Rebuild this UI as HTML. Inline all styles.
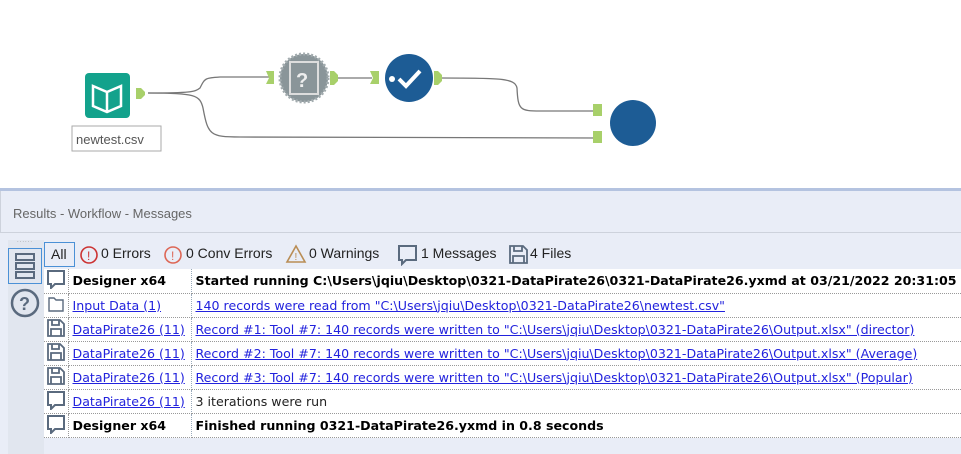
<!DOCTYPE html>
<html><head><style>
*{margin:0;padding:0;box-sizing:border-box}
body{width:961px;height:454px;overflow:hidden;background:#fff;font-family:"Liberation Sans",sans-serif;position:relative}
.abs{position:absolute}
.panel{left:0;top:188px;width:961px;height:266px;background:#e9edf7;border-top:3px solid #b4c3e0}
.hdr{left:0;top:191px;width:961px;height:42px;border-bottom:1px solid #cdd2dc;border-left:1px solid #cdd2dc}
.hdr span{position:absolute;left:12px;top:15px;font-size:13px;color:#666}
.tb{top:240px;font-size:14px;color:#222;height:26px;line-height:26px}
table{position:absolute;left:44px;top:269px;width:917px;table-layout:fixed;border-collapse:collapse;font-family:"DejaVu Sans",sans-serif;font-size:12.6px;background:#fff}
td{height:24px;border-bottom:1px dotted #999;white-space:nowrap;overflow:hidden;padding:0 4px;color:#222}
td.i{border-right:1px dotted #999;padding:0 2px}
td.s{border-right:1px dotted #9ab;padding-left:4px}
a{color:#2222dd;text-decoration:underline}
b{color:#000}
</style></head><body>
<svg class="abs" style="left:0;top:0" width="961" height="188">
<g fill="none" stroke="#777" stroke-width="1.3">
<path d="M148 93 C190 93,195 92,200 88 C205 78,205 78,220 77 L270 77"/>
<path d="M148 93 C195 93,200 95,203 108 C208 135,210 137,240 137 L596 138"/>
<path d="M338 78 L372 78"/>
<path d="M440 78 C500 78,515 78,517 88 C518 110,520 111,540 111 L596 111"/>
</g>
<rect x="85" y="73" width="45" height="45" rx="4" fill="#13a28c"/>
<path d="M93 86 L107 92 L121 86 L121 106 L107 112 L93 106Z M107 92 L107 112" fill="none" stroke="#fff" stroke-width="2.5"/>
<path d="M136 88 h5 l4 4 v3 l-4 4 h-5z" fill="#a8d06a"/>
<rect x="72" y="126" width="89" height="25" fill="#fff" stroke="#aaa"/>
<text x="76" y="144" font-size="13" fill="#555" font-family="Liberation Sans">newtest.csv</text>
<path d="M266 71 h8 v13 h-8 l3 -6z" fill="#a8d06a"/>
<circle cx="304" cy="78" r="24" fill="#8a9599" stroke="#a2abae" stroke-width="3" stroke-dasharray="2 2"/>
<rect x="290" y="62" width="28" height="32" fill="none" stroke="#ddd" stroke-width="2"/>
<text x="296" y="87" font-size="20" font-weight="bold" fill="#eee" font-family="Liberation Sans">?</text>
<path d="M330 71 h4 l4 4 v6 l-4 4 h-4z" fill="#a8d06a"/>
<path d="M370 71 h9 v13 h-9 l3 -6z" fill="#a8d06a"/>
<circle cx="409" cy="78" r="24" fill="#1d5c95"/>
<circle cx="392" cy="79" r="3" fill="#fff"/>
<path d="M399 79 l7 7 l14 -15" fill="none" stroke="#fff" stroke-width="4"/>
<path d="M434 71 h4 l4 4 v6 l-4 4 h-4z" fill="#a8d06a"/>
<rect x="593" y="104" width="9" height="12" fill="#a8d06a"/>
<rect x="593" y="131" width="9" height="12" fill="#a8d06a"/>
<circle cx="633" cy="123" r="23" fill="#1d5c95"/>
</svg>
<div class="abs panel"></div>
<div class="abs hdr"><span>Results - Workflow - Messages</span></div>
<div class="abs" style="left:8px;top:240px;width:36px;height:214px;background:#e1e6ef"></div>
<div class="abs" style="left:17px;top:238px;font-size:6px;color:#999;letter-spacing:1px">......</div>
<div class="abs" style="left:8px;top:248px;width:34px;height:36px;border:1px solid #4a90d6"></div>
<svg class="abs" style="left:14px;top:252px" width="24" height="28"><g fill="none" stroke="#5a6a7e" stroke-width="2"><rect x="2" y="2" width="18" height="6"/><rect x="2" y="11" width="18" height="6"/><rect x="2" y="20" width="18" height="6"/></g></svg>
<svg class="abs" style="left:9px;top:287px" width="32" height="32"><circle cx="16" cy="16" r="13" fill="none" stroke="#5a6a7e" stroke-width="2.5"/><text x="10" y="23" font-size="18" font-weight="bold" fill="#5a6a7e" font-family="Liberation Sans">?</text></svg>
<div class="abs tb" style="left:44px;top:242px;width:31px;height:25px;border:1px solid #4a90d6;padding-left:6px;line-height:23px">All</div>
<svg class="abs" style="left:79px;top:245px" width="20" height="20"><circle cx="10" cy="10" r="8" fill="none" stroke="#c33" stroke-width="1.6"/><text x="8" y="15" font-size="12" fill="#c33" font-family="Liberation Sans">!</text></svg>
<div class="abs tb" style="left:101px">0 Errors</div>
<svg class="abs" style="left:163px;top:245px" width="20" height="20"><circle cx="10" cy="10" r="8" fill="none" stroke="#d65" stroke-width="1.6"/><text x="8" y="15" font-size="12" fill="#d65" font-family="Liberation Sans">!</text></svg>
<div class="abs tb" style="left:186px">0 Conv Errors</div>
<svg class="abs" style="left:285px;top:244px" width="22" height="20"><path d="M11 2 L20 18 L2 18Z" fill="none" stroke="#b98d55" stroke-width="1.6"/><text x="9.5" y="16" font-size="10" fill="#b98d55" font-family="Liberation Sans">!</text></svg>
<div class="abs tb" style="left:309px">0 Warnings</div>
<svg class="abs" style="left:397px;top:244px" width="22" height="22"><path d="M2 2 H19 V16 H9 L5 20 V16 H2Z" fill="none" stroke="#5a6a7e" stroke-width="2"/></svg>
<div class="abs tb" style="left:421px">1 Messages</div>
<svg class="abs" style="left:508px;top:244px" width="22" height="22"><path d="M2 2 H15 L19 6 V19 H2Z M6 2 V7 H14 V2 M5 19 V12 H16 V19" fill="none" stroke="#5a6a7e" stroke-width="1.8"/></svg>
<div class="abs tb" style="left:530px">4 Files</div>
<table>
<colgroup><col style="width:24px"><col style="width:123px"><col></colgroup>
<tr><td class="i"><svg width="20" height="20"><path d="M2 2 H18 V15 H9 L5 19 V15 H2Z" fill="none" stroke="#5a6a7e" stroke-width="2"/></svg></td><td class="s"><b>Designer x64</b></td><td><b>Started running C:\Users\jqiu\Desktop\0321-DataPirate26\0321-DataPirate26.yxmd at 03/21/2022 20:31:05</b></td></tr>
<tr><td class="i"><svg width="20" height="20"><path d="M3 4 H8 L10 6 H17 V17 H3Z" fill="none" stroke="#5a6a7e" stroke-width="1.4"/></svg></td><td class="s"><a>Input Data (1)</a></td><td><a>140 records were read from "C:\Users\jqiu\Desktop\0321-DataPirate26\newtest.csv"</a></td></tr>
<tr><td class="i"><svg width="20" height="20"><path d="M2 2 H14 L18 6 V18 H2Z M6 2 V7 H13 V2 M5 18 V11 H15 V18" fill="none" stroke="#5a6a7e" stroke-width="1.8"/></svg></td><td class="s"><a>DataPirate26 (11)</a></td><td><a>Record #1: Tool #7: 140 records were written to "C:\Users\jqiu\Desktop\0321-DataPirate26\Output.xlsx" (director)</a></td></tr>
<tr><td class="i"><svg width="20" height="20"><path d="M2 2 H14 L18 6 V18 H2Z M6 2 V7 H13 V2 M5 18 V11 H15 V18" fill="none" stroke="#5a6a7e" stroke-width="1.8"/></svg></td><td class="s"><a>DataPirate26 (11)</a></td><td><a>Record #2: Tool #7: 140 records were written to "C:\Users\jqiu\Desktop\0321-DataPirate26\Output.xlsx" (Average)</a></td></tr>
<tr><td class="i"><svg width="20" height="20"><path d="M2 2 H14 L18 6 V18 H2Z M6 2 V7 H13 V2 M5 18 V11 H15 V18" fill="none" stroke="#5a6a7e" stroke-width="1.8"/></svg></td><td class="s"><a>DataPirate26 (11)</a></td><td><a>Record #3: Tool #7: 140 records were written to "C:\Users\jqiu\Desktop\0321-DataPirate26\Output.xlsx" (Popular)</a></td></tr>
<tr><td class="i"><svg width="20" height="20"><path d="M2 2 H18 V15 H9 L5 19 V15 H2Z" fill="none" stroke="#5a6a7e" stroke-width="2"/></svg></td><td class="s"><a>DataPirate26 (11)</a></td><td>3 iterations were run</td></tr>
<tr><td class="i"><svg width="20" height="20"><path d="M2 2 H18 V15 H9 L5 19 V15 H2Z" fill="none" stroke="#5a6a7e" stroke-width="2"/></svg></td><td class="s"><b>Designer x64</b></td><td><b>Finished running 0321-DataPirate26.yxmd in 0.8 seconds</b></td></tr>
</table>
</body></html>
